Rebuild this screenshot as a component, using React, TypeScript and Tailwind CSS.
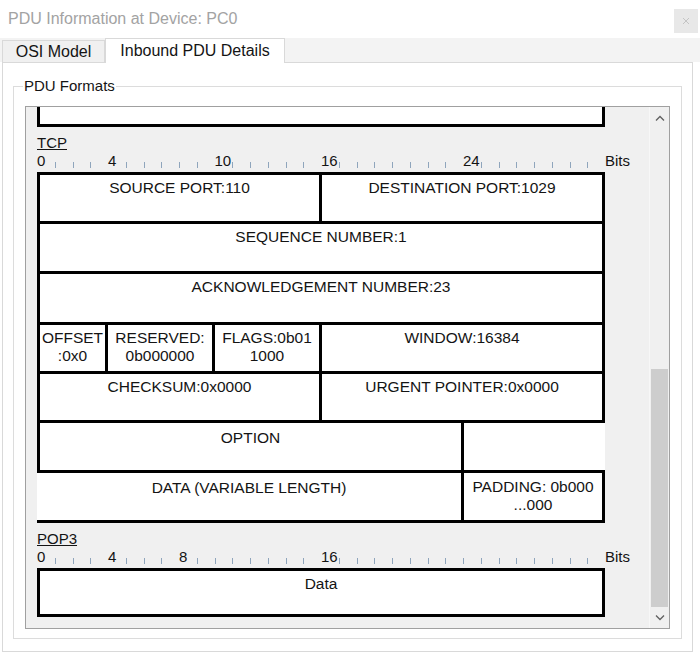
import React from 'react';

type Labels = Record<number, string>;

function Ruler({ labels }: { labels: Labels }) {
  return (
    <div className="flex h-[18px] items-end">
      <div className="grid w-[568px] grid-cols-[repeat(32,minmax(0,1fr))]">
        {Array.from({ length: 32 }).map((_, i) =>
          labels[i] !== undefined ? (
            <div key={i} className="h-[18px] whitespace-nowrap leading-[18px]">
              {labels[i]}
            </div>
          ) : (
            <div key={i} className="flex h-[18px] items-end pb-[2px]">
              <div className="h-[6px] w-px bg-[#8fa5bc]" />
            </div>
          )
        )}
      </div>
      <span className="leading-[18px]">Bits</span>
    </div>
  );
}

function Cell({ className = '', children }: { className?: string; children?: React.ReactNode }) {
  return <div className={`pt-[4px] text-center text-[15.5px] leading-[18px] ${className}`}>{children}</div>;
}

function Chevron({ up }: { up?: boolean }) {
  return (
    <svg width="10" height="6" viewBox="0 0 10 6">
      <path
        d={up ? 'M1 5.5 L5 1.5 L9 5.5' : 'M1 0.5 L5 4.5 L9 0.5'}
        fill="none"
        stroke="#606060"
        strokeWidth="1.3"
      />
    </svg>
  );
}

export default function App() {
  return (
    <div className="h-[656px] w-[700px] overflow-hidden bg-white font-['Liberation_Sans',Arial,sans-serif] text-[15px] text-[#141414]">
      {/* Title bar */}
      <div className="flex h-[38px] items-center justify-between pl-[8px] pr-[2px]">
        <span className="text-[16px] text-[#a3a3a3]">PDU Information at Device: PC0</span>
        <div className="mt-[4px] flex h-[24px] w-[24px] items-center justify-center bg-[#e8e8e8]">
          <svg width="8" height="8" viewBox="0 0 8 8">
            <path d="M1 1 L7 7 M7 1 L1 7" stroke="#c4c4c4" strokeWidth="1" />
          </svg>
        </div>
      </div>

      {/* Tabs */}
      <div className="flex h-[24px] items-end bg-[#f3f3f3] pl-[2px]">
        <div className="flex h-[22px] w-[103px] items-center justify-center border border-b-0 border-[#d9d9d9] bg-[#f0f0f0] text-[16px]">
          OSI Model
        </div>
        <div className="relative z-10 -mb-px flex h-[25px] w-[180px] items-center justify-center border border-b-0 border-[#d9d9d9] bg-white pb-[1px] text-[16px]">
          Inbound PDU Details
        </div>
      </div>

      {/* Panel */}
      <div className="ml-[2px] mr-[7px] h-[590px] border border-[#d9d9d9] bg-white px-[10px] pt-[14px]">
        <fieldset className="h-[562px] border border-[#dcdcdc] px-[11px]">
          <legend className="-ml-[2px] px-[1px] leading-[18px]">PDU Formats</legend>
          <div className="mt-[11px] flex h-[523px] border border-[#a0a0a0] bg-[#f0f0f0]">
            {/* Scroll content */}
            <div className="flex-1 overflow-hidden pl-[11px]">
              <div className="h-[20px] w-[568px] border-x-[3px] border-b-[3px] border-black bg-white" />

              <div className="mt-[7px] leading-[18px] underline">TCP</div>
              <Ruler labels={{ 0: '0', 4: '4', 10: '10', 16: '16', 24: '24' }} />

              <div className="mt-[2px] w-[568px]">
                <div className="flex h-[52px] border-[3px] border-black bg-white">
                  <Cell className="w-[279px]">SOURCE PORT:110</Cell>
                  <Cell className="flex-1 border-l-[3px] border-black">DESTINATION PORT:1029</Cell>
                </div>
                <div className="flex h-[50px] border-x-[3px] border-b-[3px] border-black bg-white">
                  <Cell className="flex-1">SEQUENCE NUMBER:1</Cell>
                </div>
                <div className="flex h-[51px] border-x-[3px] border-b-[3px] border-black bg-white">
                  <Cell className="flex-1">ACKNOWLEDGEMENT NUMBER:23</Cell>
                </div>
                <div className="flex h-[49px] border-x-[3px] border-b-[3px] border-black bg-white">
                  <Cell className="w-[65px]">
                    OFFSET
                    <br />
                    :0x0
                  </Cell>
                  <Cell className="w-[107px] border-l-[3px] border-black">
                    RESERVED:
                    <br />
                    0b000000
                  </Cell>
                  <Cell className="w-[107px] border-l-[3px] border-black">
                    FLAGS:0b01
                    <br />
                    1000
                  </Cell>
                  <Cell className="flex-1 border-l-[3px] border-black">WINDOW:16384</Cell>
                </div>
                <div className="flex h-[49px] border-x-[3px] border-b-[3px] border-black bg-white">
                  <Cell className="w-[279px]">CHECKSUM:0x0000</Cell>
                  <Cell className="flex-1 border-l-[3px] border-black">URGENT POINTER:0x0000</Cell>
                </div>
                <div className="flex h-[50px] border-b-[3px] border-l-[3px] border-black bg-white">
                  <Cell className="w-[421px] pt-[6px]">OPTION</Cell>
                  <Cell className="flex-1 border-l-[3px] border-black" />
                </div>
                <div className="flex h-[50px] border-b-[3px] border-r-[3px] border-black bg-white">
                  <Cell className="w-[424px] pt-[6px]">DATA (VARIABLE LENGTH)</Cell>
                  <Cell className="flex-1 border-l-[3px] border-black pt-[5px] leading-[17px]">
                    PADDING: 0b000
                    <br />
                    ...000
                  </Cell>
                </div>
              </div>

              <div className="mt-[7px] leading-[18px] underline">POP3</div>
              <Ruler labels={{ 0: '0', 4: '4', 8: '8', 16: '16' }} />
              <div className="mt-[2px] flex h-[49px] w-[568px] border-[3px] border-black bg-white">
                <Cell className="flex-1">Data</Cell>
              </div>
            </div>

            {/* Scrollbar */}
            <div className="flex w-[20px] flex-col border-l border-[#f7f7f7] bg-[#f0f0f0]">
              <div className="flex h-[21px] items-center justify-center">
                <Chevron up />
              </div>
              <div className="flex flex-1 flex-col justify-end px-px">
                <div className="h-[238px] bg-[#cdcdcd]" />
              </div>
              <div className="flex h-[21px] items-center justify-center">
                <Chevron />
              </div>
            </div>
          </div>
        </fieldset>
      </div>
    </div>
  );
}
